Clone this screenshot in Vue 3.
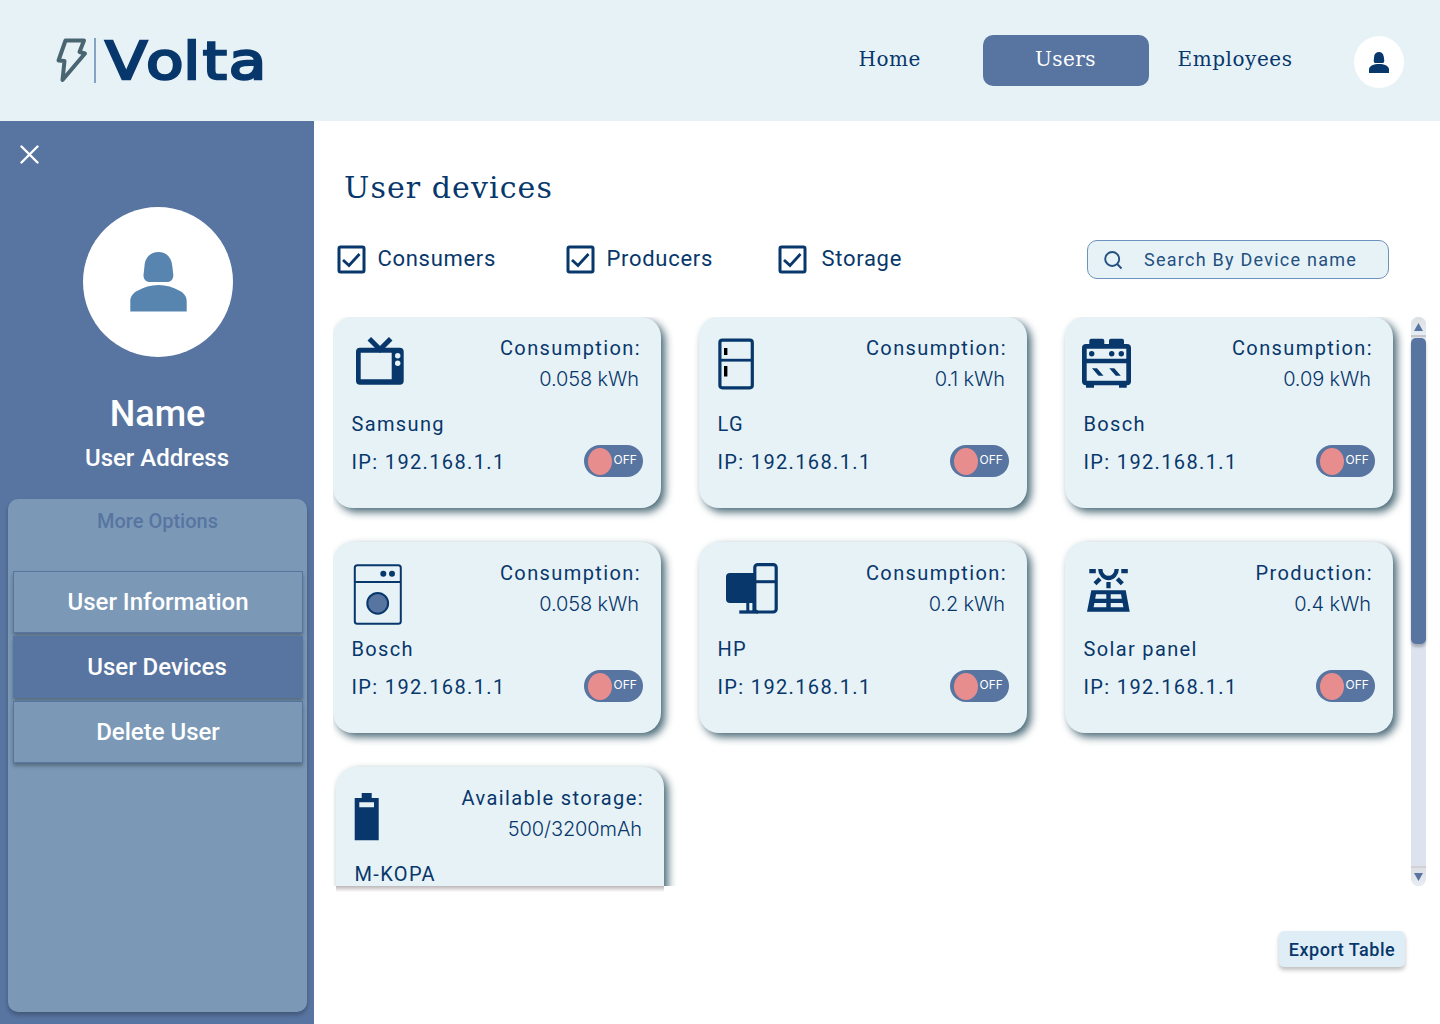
<script setup>
const navItems = [
  { label: 'Home', cls: 'nav-home' },
  { label: 'Users', cls: 'nav-users' },
  { label: 'Employees', cls: 'nav-employees' },
]
const filters = [
  { label: 'Consumers', cls: 'f-consumers' },
  { label: 'Producers', cls: 'f-producers' },
  { label: 'Storage', cls: 'f-storage' },
]
const options = [
  { label: 'User Information', active: false },
  { label: 'User Devices', active: true },
  { label: 'Delete User', active: false },
]
const devices = [
  { icon: 'tv', metric: 'Consumption:', value: '0.058 kWh', name: 'Samsung' },
  { icon: 'fridge', metric: 'Consumption:', value: '0.1 kWh', name: 'LG' },
  { icon: 'stove', metric: 'Consumption:', value: '0.09 kWh', name: 'Bosch' },
  { icon: 'washer', metric: 'Consumption:', value: '0.058 kWh', name: 'Bosch' },
  { icon: 'pc', metric: 'Consumption:', value: '0.2 kWh', name: 'HP' },
  { icon: 'solar', metric: 'Production:', value: '0.4 kWh', name: 'Solar panel' },
  { icon: 'battery', metric: 'Available storage:', value: '500/3200mAh', name: 'M-KOPA' },
]
</script>

<template>
  <div class="page">
    <header class="topbar">
      <svg class="logo" width="230" height="80" viewBox="0 0 230 80">
        <path d="M15.500 10.500 L34 10.500 L29.500 22 L35 23.500 L12.500 50 L14.500 31 L8.500 30.500 Z" fill="none" stroke="#4a6572" stroke-width="4" stroke-linejoin="round" />
        <path d="M45 8V53" stroke="#5b82ae" stroke-width="1.400" />
        <text class="wordmark" transform="scale(1.180 1)" x="46.900 81.300 112.900 129.500 151.500" y="49.500">Volta</text>
      </svg>
      <nav class="nav">
        <a v-for="n in navItems" :key="n.label" :class="['nav-item', n.cls]">{{ n.label }}</a>
      </nav>
      <div class="avatar-small">
        <svg width="20" height="22" viewBox="0 0 57 60" preserveAspectRatio="none">
          <path d="M15 10Q18 0 28.500 0T42 12L43.500 23Q44 30 37 30H20Q13 30 13.500 23Z" fill="#07376b" />
          <path d="M0 57V48C0 38 14 33 28.500 33S57 38 57 48V57Z" fill="#07376b" />
        </svg>
      </div>
    </header>

    <div class="body">
      <aside class="sidebar">
        <svg class="close" width="20" height="20" viewBox="0 0 20 20">
          <path d="M1.500 1.500L17.500 17.500M17.500 1.500L1.500 17.500" stroke="#fff" stroke-width="2.400" stroke-linecap="round" />
        </svg>
        <div class="avatar-big">
          <svg width="57" height="60" viewBox="0 0 57 60">
            <path d="M14.500 14C15 5 21 0 28.500 0S41.500 5 42.300 14L43.300 23C43.500 27 41 30 37 30H20C16 30 13.300 27 13.500 23Z" fill="#5885b0" />
            <path d="M.300 59.500V49C.300 45 3 41 7 39Q17 33 28.500 33T50 39C54 41 56.700 45 56.700 49V59.500Z" fill="#5885b0" />
          </svg>
        </div>
        <h2 class="user-name">Name</h2>
        <p class="user-address">User Address</p>
        <div class="panel">
          <p class="panel-title">More Options</p>
          <button v-for="o in options" :key="o.label" :class="['option', { active: o.active }]">{{ o.label }}</button>
        </div>
      </aside>

      <main class="main">
        <h1 class="title">User devices</h1>
        <div class="filters">
          <label v-for="f in filters" :key="f.label" :class="['filter', f.cls]">
            <svg width="28" height="29" viewBox="0 0 28 29">
              <rect x="1" y="2" width="25" height="25" rx="1.500" fill="none" stroke="#07376b" stroke-width="3" />
              <path d="M5 15L11 20.500L21.500 9" fill="none" stroke="#07376b" stroke-width="2.800" />
            </svg>
            <span>{{ f.label }}</span>
          </label>
          <div class="search">
            <svg width="20" height="20" viewBox="0 0 20 20">
              <circle cx="8.200" cy="9" r="7" fill="none" stroke="#24507f" stroke-width="1.900" />
              <path d="M13.200 14L17.500 18.500" stroke="#24507f" stroke-width="1.900" />
            </svg>
            <span>Search By Device name</span>
          </div>
        </div>

        <div class="listing">
          <div class="viewport">
            <div class="grid">
              <article v-for="(d, i) in devices" :key="i" :class="['card', { shifted: i === 6 }]">
                <div class="card-head">
                  <svg class="icon" width="80" height="72" viewBox="0 0 80 72">
                    <g v-if="d.icon === 'tv'">
                      <path d="M21.300 6.700L32 17.500L42.700 6.700" fill="none" stroke="#07376b" stroke-width="5" />
                      <path fill-rule="evenodd" fill="#07376b" d="M12 15.700H51.700Q55.700 15.700 55.700 19.700V48.700Q55.700 52.700 51.700 52.700H12Q8 52.700 8 48.700V19.700Q8 15.700 12 15.700ZM12.700 20.700V47.300H43.700V20.700Z" />
                      <circle cx="49.700" cy="23.700" r="2.700" fill="#e7f2f7" /><circle cx="49.700" cy="31.300" r="2.700" fill="#e7f2f7" />
                    </g>
                    <g v-else-if="d.icon === 'fridge'">
                      <rect x="5.900" y="8.200" width="32.400" height="47.600" rx="2.500" fill="none" stroke="#07376b" stroke-width="3.200" />
                      <path d="M6 28.200H38" stroke="#07376b" stroke-width="2.800" />
                      <path d="M10 16h3.400v7h-3.400zM10 34h3.400v10.600h-3.400z" fill="#000" />
                    </g>
                    <g v-else-if="d.icon === 'stove'" fill="#07376b">
                      <path d="M9.300 13V8.700Q9.300 6.700 11.300 6.700H22.300Q24.300 6.700 24.300 8.700V13ZM29 13V8.700Q29 6.700 31 6.700H42Q44 6.700 44 8.700V13ZM6 52h8v3.700h-8zM39 52h7.700v3.700h-7.700z" />
                      <rect x="2" y="12" width="49" height="41.300" rx="4" />
                      <path d="M6.700 16.700h39.600v10h-39.600zM6.700 31.300h39.600v17.400h-39.600z" fill="#e7f2f7" />
                      <circle cx="11.700" cy="21.700" r="2.700" /><circle cx="31.700" cy="21.700" r="2.700" /><circle cx="41.300" cy="21.700" r="2.700" />
                      <path d="M12 36.300h5l6.500 7.400h-5zM29.300 36.300h5l6.500 7.400h-5z" />
                    </g>
                    <g v-else-if="d.icon === 'washer'" stroke="#07376b" stroke-width="2" fill="none">
                      <rect x="6.800" y="8.300" width="46" height="58.500" rx="2.500" />
                      <path d="M7 25H53" />
                      <circle cx="29.700" cy="46.300" r="10.400" fill="#5874a1" />
                      <g fill="#07376b" stroke="none"><circle cx="35.300" cy="16.700" r="3" /><circle cx="44" cy="16.700" r="3" /></g>
                    </g>
                    <g v-else-if="d.icon === 'pc'">
                      <path d="M16 16H40V46H16Q12 46 12 42V20Q12 16 16 16Z" fill="#07376b" />
                      <rect x="40.800" y="7.600" width="21.400" height="47.400" rx="3" fill="none" stroke="#07376b" stroke-width="3.200" />
                      <path d="M41 24.700H62" stroke="#07376b" stroke-width="3" />
                      <path d="M33.800 45V55" stroke="#07376b" stroke-width="3" />
                      <path d="M39.500 45V55" stroke="#07376b" stroke-width="2.200" />
                      <path d="M25.300 55H44" stroke="#07376b" stroke-width="3.300" />
                    </g>
                    <g v-else-if="d.icon === 'solar'">
                      <path d="M9.300 14.200h6.500M41.300 14.200h6.500M28.500 25v6.200M20 21.700l-5 5M37.300 21.700l5 5M20.300 12a8.200 9 0 0 0 16.400 0" fill="none" stroke="#07376b" stroke-width="4.300" />
                      <path fill-rule="evenodd" fill="#07376b" d="M11.300 33.300H45.700L49.700 54.700H7ZM16 37.300L15.200 41.700H26.300V37.300ZM30.700 37.300V41.700H41.800L41 37.300ZM14.400 46L13.600 50.300H26.300V46ZM30.700 46V50.300H43.400L42.600 46Z" />
                    </g>
                    <g v-else>
                      <path fill-rule="evenodd" fill="#07376b" d="M10.700 11H20.700V16H27.700V58.200H3.700V16H10.700ZM8.300 20.300V25.300H23V20.300Z" />
                    </g>
                  </svg>
                  <div class="reading">
                    <p class="metric">{{ d.metric }}</p>
                    <p class="value">{{ d.value }}</p>
                  </div>
                </div>
                <p class="name">{{ d.name }}</p>
                <div class="card-foot">
                  <span class="ip">IP: 192.168.1.1</span>
                  <span class="toggle"><i class="knob"></i><span>OFF</span></span>
                </div>
              </article>
            </div>
          </div>
          <div class="scrollbar">
            <div class="sb-btn"><svg width="11" height="8" viewBox="0 0 11 8"><path d="M5.500 0L10 8H1Z" fill="#5874a1" /></svg></div>
            <div class="thumb"></div>
            <div class="sb-btn down"><svg width="11" height="8" viewBox="0 0 11 8"><path d="M5.500 8L10 0H1Z" fill="#5874a1" /></svg></div>
          </div>
        </div>
        <div class="cut-shadow"></div>
        <button class="export">Export Table</button>
      </main>
    </div>
  </div>
</template>

<style>
body { margin: 0; background: #fff; }
</style>

<style scoped>
* { box-sizing: border-box; }
p, h1, h2 { margin: 0; }
button { border: 0; padding: 0; font-family: inherit; }
svg { display: block; flex: none; }
.page { width: 1440px; height: 1024px; overflow: hidden; font-family: Roboto, "Liberation Sans", sans-serif; color: #07376b; }
.topbar { height: 121px; background: #e7f2f7; display: flex; align-items: flex-start; padding: 30px 36px 0 50px; }
.logo { overflow: visible; }
.wordmark { font: 52px "DejaVu Sans", sans-serif; fill: #07376b; stroke: #07376b; stroke-width: 2.500px; }
.nav { display: flex; margin-left: 556px; padding-top: 5px; font: 20px/48px "DejaVu Serif", serif; }
.nav-item { height: 51px; white-space: nowrap; }
.nav-home { width: 147px; padding-left: 22.500px; letter-spacing: 0.5px; }
.nav-users { width: 166px; border-radius: 10px; background: #5874a1; color: #fff; text-align: center; letter-spacing: 0.4px; padding-right: 1px; }
.nav-employees { width: 190px; padding-left: 28.500px; letter-spacing: 0.55px; }
.avatar-small { flex: none; width: 50px; height: 52px; margin: 6px 0 0 15px; border-radius: 50%; background: #fff; display: flex; justify-content: center; padding-top: 16px; }

.body { display: flex; height: 903px; }
.sidebar { width: 314px; background: #5874a1; color: #fff; display: flex; flex-direction: column; align-items: center; }
.close { align-self: flex-start; margin: 24px 0 0 20px; }
.avatar-big { width: 150px; height: 150px; margin: 42px 0 0 2px; border-radius: 50%; background: #fff; display: flex; justify-content: center; padding: 45px 0 0 1px; }
.user-name { margin: 36px 0 0 1px; font-size: 36px; line-height: 42px; font-weight: 500; }
.user-address { margin: 9px 0 0 0; font-size: 24px; line-height: 28px; font-weight: 500; }
.panel { width: 299px; height: 513px; margin: 27px 0 0 1px; padding: 10px 4px 0 5px; border-radius: 10px; background: #7b99b7; box-shadow: 0 3px 4px rgba(0, 0, 0, .25); display: flex; flex-direction: column; gap: 3px; }
.panel-title { height: 59px; font-size: 20px; line-height: 24px; font-weight: 500; color: #5874a1; text-align: center; padding-right: 1px; }
.option { width: 290px; height: 62px; background: #7b99b7; border: 1px solid #5874a1; box-shadow: 0 3px 4px rgba(0, 0, 0, .3); color: #fff; font-size: 24px; font-weight: 500; }
.option.active { background: #5874a1; padding-right: 2px; }

.main { flex: 1; padding: 48px 14px 0 19px; display: flex; flex-direction: column; }
.title { margin-left: 11px; padding-top: 1px; font: 400 30px/36px "DejaVu Serif", serif; letter-spacing: 1.1px; }
.filters { display: flex; align-items: center; height: 39px; margin: 34px 37px 0 5px; font-size: 22px; line-height: 28px; letter-spacing: .7px; }
.filter { display: flex; align-items: center; gap: 11.500px; }
.filter svg { overflow: visible; }
.filter span { position: relative; top: -1px; }
.f-consumers { width: 229px; }
.f-producers { width: 212px; }
.f-storage { gap: 14.500px; }
.search { margin-left: auto; width: 302.500px; height: 39px; border: 1px solid #6d92bd; border-radius: 10px; background: #e7f2f7; display: flex; align-items: center; padding-left: 16px; gap: 20.500px; font-size: 18px; letter-spacing: 1.25px; color: #24507f; white-space: nowrap; }

.listing { display: flex; justify-content: space-between; height: 569px; margin-top: 38px; flex: none; }
.viewport { width: 1073px; height: 569px; overflow: hidden; }
.grid { display: grid; grid-template-columns: repeat(3, 328px); grid-auto-rows: 191px; gap: 34px 38px; }
.card { border-radius: 20px; background: #e7f2f7; box-shadow: 4px 4px 8px #486875; padding: 15px 18px 0 18px; display: flex; flex-direction: column; }
.shifted { position: relative; left: 3px; }
.card-head { display: flex; justify-content: space-between; height: 76px; margin-left: -3px; }
.reading { text-align: right; white-space: nowrap; padding: 1px 2px 0 0; margin-left: -60px; }
.metric { font-size: 20px; line-height: 31px; letter-spacing: 1.4px; }
.value { font: 350 20px/31px Inter, Roboto, sans-serif; letter-spacing: -.1px; padding-right: 2px; }
.name { font-size: 20px; line-height: 32px; letter-spacing: 1.35px; padding-left: .5px; }
.card-foot { display: flex; align-items: center; justify-content: space-between; margin-top: 5px; height: 32px; }
.ip { font-size: 20px; letter-spacing: 1.36px; padding: 1px 0 0 .5px; }
.toggle { width: 59px; height: 32px; border-radius: 16px; background: #5874a1; display: flex; align-items: center; padding-left: 4px; gap: 1.500px; color: #fff; font: 400 12px/30px Inter, sans-serif; }
.toggle span { padding-bottom: 2px; }
.knob { width: 24px; height: 27px; border-radius: 50%; background: #e88d8d; }
.scrollbar { width: 15px; height: 569px; border-radius: 8px; background: #dce3ef; display: flex; flex-direction: column; }
.sb-btn { height: 20px; padding-top: 2px; border-radius: 8px 8px 0 0; background: linear-gradient(#dcdfe3, #e7edf5); border-bottom: 2px solid #c7c7cb; display: flex; align-items: center; justify-content: center; }
.thumb { height: 306px; margin-top: 1px; border-radius: 5px; background: #5874a1; box-shadow: 0 3px 3px rgba(0, 0, 0, .25); }
.down { margin-top: auto; padding-top: 0; border-radius: 0 0 8px 8px; border: 0; border-top: 2px solid #d2d2d5; }
.cut-shadow { width: 328px; height: 6px; margin-left: 3px; flex: none; background: linear-gradient(rgba(80, 65, 70, .38), rgba(80, 65, 70, 0)); }
.export { align-self: flex-end; width: 126px; height: 36px; margin: 39px 21px 0 0; flex: none; border-radius: 5px; background: #deedf6; box-shadow: 0 3px 4px rgba(0, 0, 0, .25); color: #07376b; font-size: 18px; font-weight: 500; letter-spacing: .5px; white-space: nowrap; }
</style>
